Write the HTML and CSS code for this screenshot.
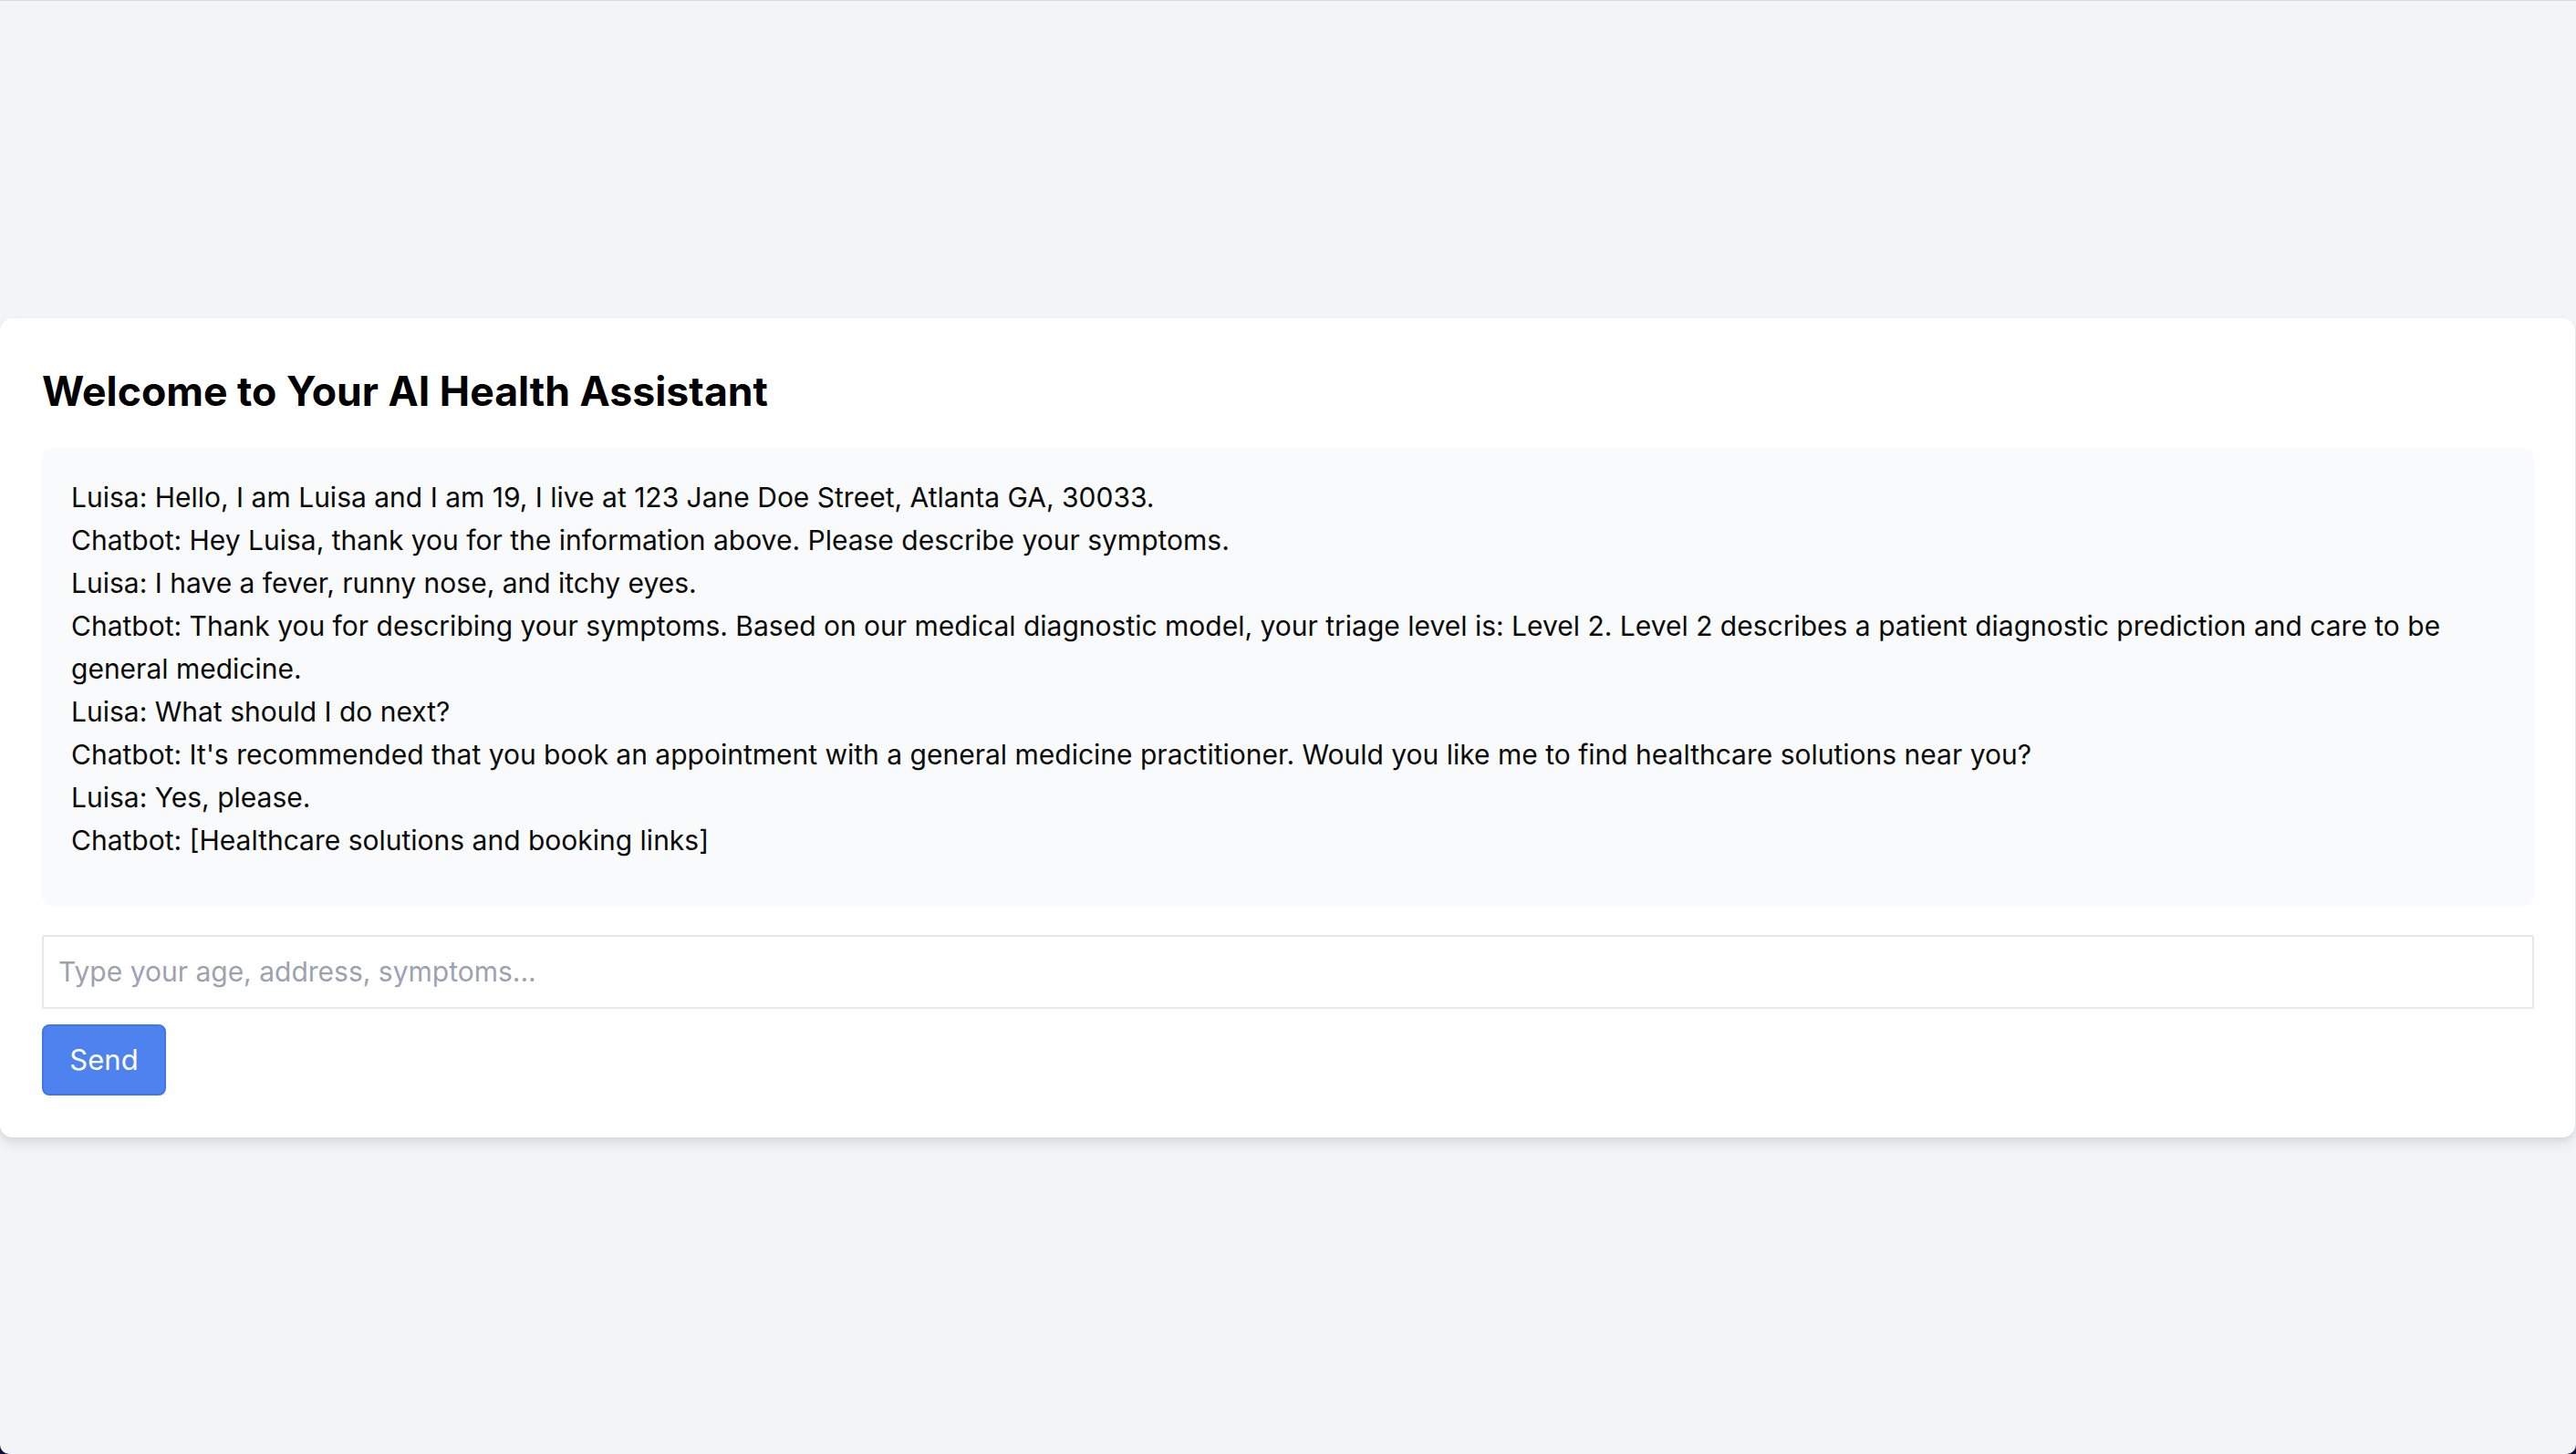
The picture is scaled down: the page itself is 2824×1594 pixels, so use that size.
FILE: index.html
```html
<!DOCTYPE html>
<html lang="en">
<head>
<meta charset="utf-8">
<title>AI Health Assistant</title>
<link rel="stylesheet" href="styles.css">
</head>
<body>
<div class="screen">
  <main class="card">
    <h1 class="title">Welcome to Your AI Health Assistant</h1>
    <div class="chat">
      <p class="msg">Luisa: Hello, I am Luisa and I am 19, I live at 123 Jane Doe Street, Atlanta GA, 30033.</p>
      <p class="msg">Chatbot: Hey Luisa, thank you for the information above. Please describe your symptoms.</p>
      <p class="msg">Luisa: I have a fever, runny nose, and itchy eyes.</p>
      <p class="msg">Chatbot: Thank you for describing your symptoms. Based on our medical diagnostic model, your triage level is: Level 2. Level 2 describes a patient diagnostic prediction and care to be general medicine.</p>
      <p class="msg">Luisa: What should I do next?</p>
      <p class="msg">Chatbot: It's recommended that you book an appointment with a general medicine practitioner. Would you like me to find healthcare solutions near you?</p>
      <p class="msg">Luisa: Yes, please.</p>
      <p class="msg">Chatbot: [Healthcare solutions and booking links]</p>
    </div>
    <input class="field" type="text" placeholder="Type your age, address, symptoms...">
    <button class="send" type="button">Send</button>
  </main>
</div>
</body>
</html>
```
FILE: styles.css
```css
html {
  margin: 0;
  padding: 0;
  background: #0b0a3c;
}
body {
  margin: 0;
  padding: 0;
  font-family: Inter, "Liberation Sans", sans-serif;
}
.screen {
  box-sizing: border-box;
  height: 1594px;
  background: #f3f4f6;
  border-top: 1px solid #d9dadd;
  border-radius: 0 0 10px 10px;
  display: flex;
  flex-direction: column;
  justify-content: center;
}
.card {
  box-sizing: border-box;
  width: 2823px;
  height: 898px;
  background: #ffffff;
  border-radius: 14px;
  box-shadow: 0 8px 14px rgba(0, 0, 0, 0.08), 0 3px 6px rgba(0, 0, 0, 0.05);
  padding: 49px 45px 45px 46px;
  display: flex;
  flex-direction: column;
  align-items: flex-start;
}
.title {
  margin: 0 0 31px 0;
  font-size: 44.6px;
  line-height: 62px;
  font-weight: 700;
  color: #000;
  letter-spacing: 0;
}
.chat {
  box-sizing: border-box;
  align-self: stretch;
  background: #f9fafb;
  border-radius: 10px;
  padding: 31px 32px 48px 32px;
}
.msg {
  margin: 0;
  font-size: 30px;
  line-height: 47px;
  color: #0a0a0a;
}
.field {
  box-sizing: border-box;
  align-self: stretch;
  margin-top: 32px;
  height: 81px;
  border: 2px solid #e5e7eb;
  border-radius: 2px;
  padding: 0 16px;
  font-family: Inter, "Liberation Sans", sans-serif;
  font-size: 30px;
  color: #111;
  background: #fff;
  outline: none;
}
.field::placeholder {
  color: #9ca3af;
}
.send {
  margin-top: 17px;
  box-sizing: border-box;
  width: 136px;
  height: 78px;
  background: #4e82ee;
  border: 2px solid #3f77ec;
  border-radius: 8px;
  color: #fff;
  font-family: Inter, "Liberation Sans", sans-serif;
  font-size: 31px;
  padding: 0;
}
```
